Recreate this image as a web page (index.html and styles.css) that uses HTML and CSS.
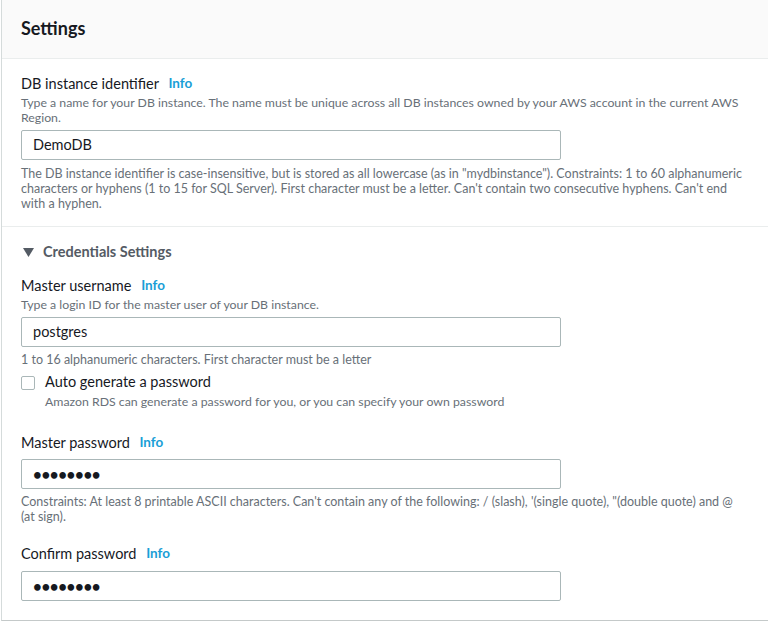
FILE: index.html
```html
<!DOCTYPE html>
<html lang="en">
<head>
<meta charset="utf-8">
<title>Settings</title>
<link rel="stylesheet" href="styles.css">
</head>
<body>
<div class="panel">
  <div class="panel-header"><h2 class="panel-title">Settings</h2></div>

  <div class="section section-first">
    <div class="label">DB instance identifier <a class="info">Info</a></div>
    <div class="desc">Type a name for your DB instance. The name must be unique across all DB instances owned by your AWS account in the current AWS Region.</div>
    <div class="input input-first">DemoDB</div>
    <div class="hint hint-first">The DB instance identifier is case-insensitive, but is stored as all lowercase (as in "mydbinstance"). Constraints: 1 to 60 alphanumeric characters or hyphens (1 to 15 for SQL Server). First character must be a letter. Can't contain two consecutive hyphens. Can't end with a hyphen.</div>
  </div>

  <div class="section section-second">
    <div class="expander">
      <svg class="caret" width="11" height="9" viewBox="0 0 11 9"><polygon points="0,0 11,0 5.5,9" fill="#545b64"/></svg>
      <span>Credentials Settings</span>
    </div>

    <div class="label label-user">Master username <a class="info">Info</a></div>
    <div class="desc">Type a login ID for the master user of your DB instance.</div>
    <div class="input">postgres</div>
    <div class="hint">1 to 16 alphanumeric characters. First character must be a letter</div>

    <div class="check-row">
      <span class="checkbox"></span>
      <div class="check-text">
        <div class="check-label">Auto generate a password</div>
        <div class="desc">Amazon RDS can generate a password for you, or you can specify your own password</div>
      </div>
    </div>

    <div class="label label-pass">Master password <a class="info">Info</a></div>
    <div class="input input-pass"><span class="dots">••••••••</span></div>
    <div class="hint">Constraints: At least 8 printable ASCII characters. Can't contain any of the following: / (slash), '(single quote), "(double quote) and @ (at sign).</div>

    <div class="label label-confirm">Confirm password <a class="info">Info</a></div>
    <div class="input input-confirm"><span class="dots">••••••••</span></div>
  </div>
</div>
</body>
</html>
```
FILE: styles.css
```css
* { box-sizing: border-box; }
html, body { margin: 0; padding: 0; background: #ffffff; }
body {
  font-family: Lato, "Open Sans", "Liberation Sans", sans-serif;
  color: #16191f;
  width: 768px;
  height: 621px;
  overflow: hidden;
}
.panel {
  margin-left: 1px;
  border-left: 1px solid #d5dbdb;
  border-bottom: 1px solid #c4c9c9;
  height: 621px;
}
.panel-header {
  height: 59px;
  background: #fafafa;
  border-bottom: 1px solid #eaeded;
  padding: 0 19px;
  display: flex;
  align-items: center;
}
.panel-title {
  margin: 0;
  font-size: 18px;
  font-weight: 700;
  line-height: 22px;
  position: relative;
  top: -1px;
}
.section { padding: 0 19px; }
.section-first {
  padding-top: 14px;
  padding-bottom: 15px;
  border-bottom: 1px solid #eaeded;
}
.section-second { padding-top: 14px; }
.label {
  font-size: 14.5px;
  line-height: 22px;
}
.info {
  color: #1a9ed6;
  font-weight: 700;
  font-size: 13.5px;
  line-height: 1;
  margin-left: 6px;
  text-decoration: none;
  position: relative;
  top: -1px;
}
.desc, .hint {
  font-size: 12.3px;
  line-height: 15px;
  color: #687078;
}
.hint { font-size: 12.5px; }
.input {
  width: 540px;
  height: 30px;
  border: 1px solid #aab7b8;
  border-radius: 2px;
  padding: 0 11px;
  font-size: 14.5px;
  line-height: 28px;
  margin-top: 5px;
}
.hint { margin-top: 5px; }
.hint-first { margin-top: 6px; }
.expander {
  display: flex;
  align-items: center;
  font-size: 14.5px;
  font-weight: 700;
  line-height: 22px;
  color: #545b64;
}
.caret { margin-left: 2px; margin-right: 9px; }
.label-user { margin-top: 12px; }
.check-row {
  display: flex;
  margin-top: 4px;
}
.checkbox {
  width: 14px;
  height: 14px;
  border: 1px solid #aab7b8;
  border-radius: 2px;
  margin-top: 5px;
  margin-right: 10px;
  flex: none;
}
.check-label {
  font-size: 14.5px;
  line-height: 22px;
}
.check-text .desc { margin-top: 1px; }
.label-pass { margin-top: 23px; }
.label-confirm { margin-top: 19px; }
.input-confirm { margin-top: 6px; }
.dots {
  font-size: 15px;
  font-weight: 700;
  letter-spacing: -0.3px;
  line-height: 1;
  color: #16191f;
  position: relative;
  top: 1px;
}
```
